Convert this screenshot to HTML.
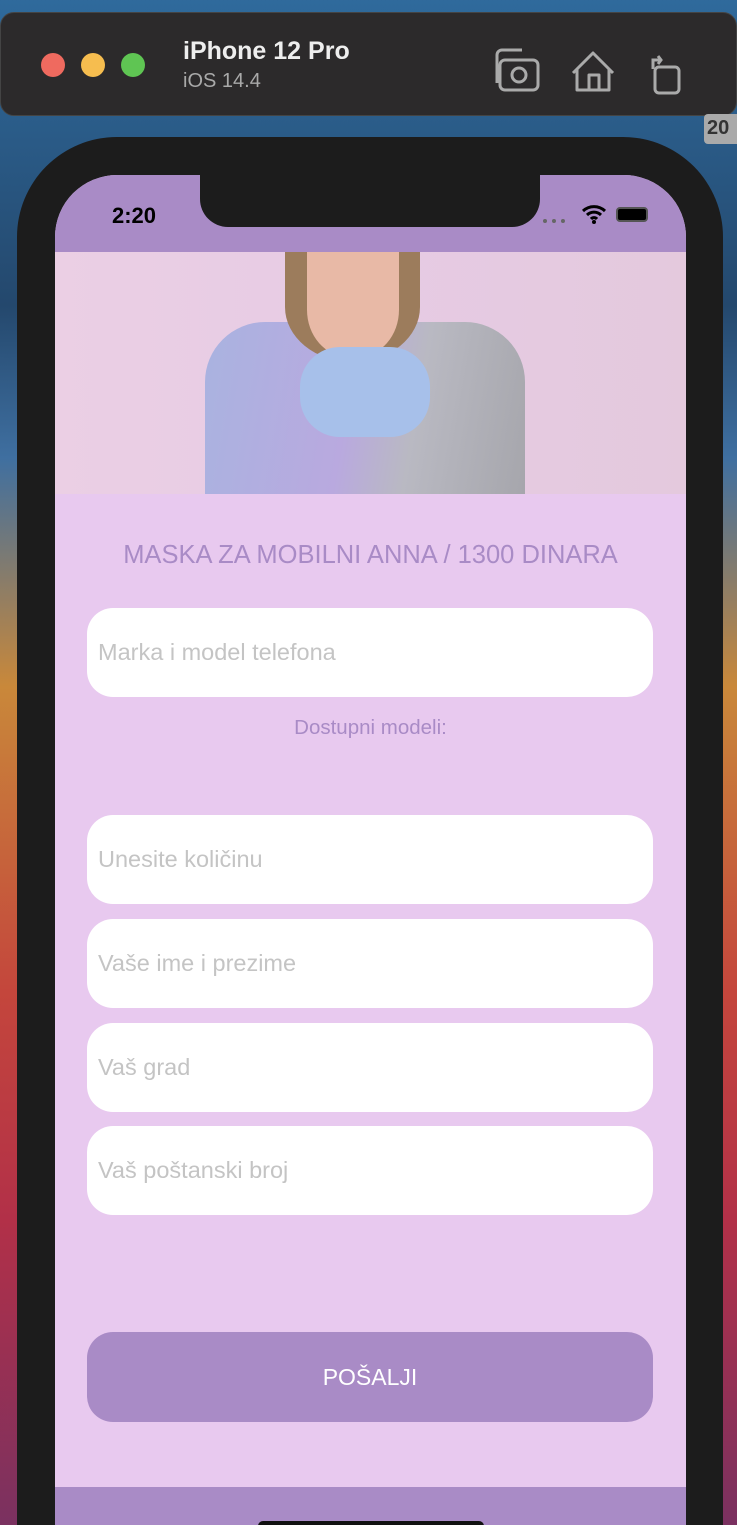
<!DOCTYPE html>
<html><head><meta charset="utf-8"><style>
*{margin:0;padding:0;box-sizing:border-box}
html,body{width:737px;height:1525px;overflow:hidden}
body{position:relative;font-family:"Liberation Sans",sans-serif;
background:linear-gradient(180deg,#2f6a9c 0%,#24486d 20%,#3f6fa0 30%,#c9883a 45%,#c4463c 65%,#b23048 80%,#7a3160 100%)}
.bar{position:absolute;left:0;top:12px;width:737px;height:104px;background:#2c2a2b;border-radius:14px;border:1px solid #444}
.dot{position:absolute;top:40px;width:24px;height:24px;border-radius:50%}
.phone{position:absolute;left:17px;top:137px;width:706px;height:1388px;background:#1c1c1c;border-radius:100px 100px 0 0}
.screen{position:absolute;left:55px;top:175px;width:631px;height:1350px;background:#e8c9ef;border-radius:62px 62px 0 0;overflow:hidden}
.status{position:absolute;left:0;top:0;width:631px;height:77px;background:#a98bc6}
.notch{position:absolute;left:145px;top:0;width:340px;height:52px;background:#1c1c1c;border-radius:0 0 28px 28px}
.img{position:absolute;left:0;top:77px;width:631px;height:242px;background:linear-gradient(90deg,#ebcfe4,#e6cbe4 50%,#e4c9dd);overflow:hidden}
.inp{position:absolute;left:32px;width:566px;height:89px;background:#fff;border-radius:26px;color:#c4c4c4;font-size:23.5px;padding-left:11px;line-height:89px}
</style></head><body>
<div class="bar">
<div class="dot" style="left:40px;background:#ef6a5f"></div>
<div class="dot" style="left:80px;background:#f6bd4f"></div>
<div class="dot" style="left:120px;background:#5fc553"></div>
<div style="position:absolute;left:182px;top:24px;color:#eee;font-weight:bold;font-size:25px">iPhone 12 Pro</div>
<div style="position:absolute;left:182px;top:57px;color:#a9a9a9;font-size:20px">iOS 14.4</div>
<svg style="position:absolute;left:494px;top:32px" width="140" height="50" fill="none" stroke="#aaa" stroke-width="3">
<rect x="5" y="15" width="38" height="30" rx="5"/><path d="M2 38V10a5 5 0 0 1 5-5h20"/><circle cx="24" cy="30" r="7"/>
<path d="M94 45V30h10v15M82 24v21h32V24M78 28l20-20 20 20" stroke-linejoin="round"/>
</svg>
<svg style="position:absolute;left:648px;top:40px" width="40" height="44" fill="none" stroke="#aaa" stroke-width="3"><rect x="6" y="14" width="24" height="26" rx="4"/><path d="M4 16V7h8M9 3l3 4-3 4"/></svg>
</div>
<div style="position:absolute;left:704px;top:114px;width:40px;height:30px;background:#aaa;border-radius:4px;color:#333;font-weight:bold;font-size:20px;padding:3px">20</div>
<div class="phone"></div>
<div class="screen">
<div class="status"></div>
<div class="notch"></div>
<div style="position:absolute;left:57px;top:28px;font-weight:bold;font-size:22px">2:20</div>
<div style="position:absolute;left:488px;top:44px;width:22px;height:4px;border-top:4px dotted #666"></div>
<svg style="position:absolute;left:526px;top:28px" width="26" height="22"><path d="M2 8a16 16 0 0 1 22 0M6 12a10 10 0 0 1 14 0M10 16a4 4 0 0 1 6 0" stroke="#000" stroke-width="3" fill="none"/><circle cx="13" cy="19" r="2"/></svg>
<div style="position:absolute;left:561px;top:32px;width:32px;height:15px;border:2px solid #555;border-radius:4px;background:#000"></div>
<div class="img">
<div style="position:absolute;left:150px;top:70px;width:320px;height:172px;background:linear-gradient(100deg,#a9b3e0,#b9a9df 45%,#b9b9c2 65%,#a6a6ac);border-radius:60px 60px 0 0"></div>
<div style="position:absolute;left:230px;top:0;width:135px;height:110px;background:#9c7c5c;border-radius:0 0 50% 50%"></div>
<div style="position:absolute;left:252px;top:0;width:92px;height:105px;background:#e8b9a6;border-radius:0 0 45% 45%"></div>
<div style="position:absolute;left:245px;top:95px;width:130px;height:90px;background:#a7c0ea;border-radius:40px"></div>
</div>
<div style="position:absolute;left:0;top:366px;width:631px;text-align:center;color:#a98bc6;font-size:25.5px">MASKA ZA MOBILNI ANNA / 1300 DINARA</div>
<div class="inp" style="top:433px">Marka i model telefona</div>
<div style="position:absolute;left:0;top:541px;width:631px;text-align:center;color:#a98bc6;font-size:20.5px">Dostupni modeli:</div>
<div class="inp" style="top:640px">Unesite količinu</div>
<div class="inp" style="top:744px">Vaše ime i prezime</div>
<div class="inp" style="top:848px">Vaš grad</div>
<div class="inp" style="top:951px">Vaš poštanski broj</div>
<div style="position:absolute;left:32px;top:1157px;width:566px;height:90px;background:#a98bc6;border-radius:26px;color:#fff;font-size:23px;text-align:center;line-height:90px">POŠALJI</div>
<div style="position:absolute;left:0;top:1312px;width:631px;height:100px;background:#a98bc6"></div>
<div style="position:absolute;left:203px;top:1346px;width:226px;height:10px;background:#111;border-radius:5px"></div>
</div>
</body></html>
